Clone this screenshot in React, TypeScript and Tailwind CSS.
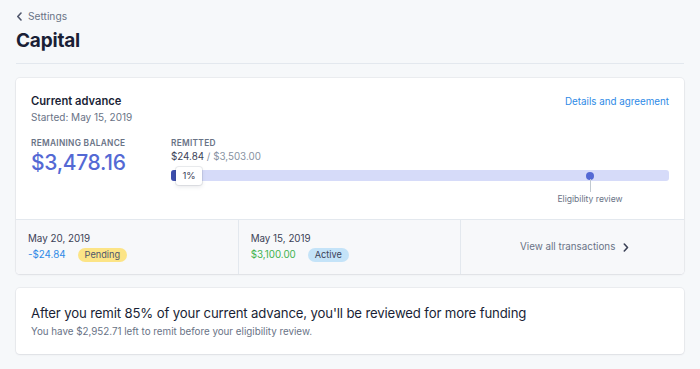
import React from "react";

export default function App() {
  return (
    <div
      className="min-h-[369px] w-[700px] bg-[#f6f8fa] px-4 text-[#1a1f36]"
      style={{ fontFamily: "Inter, 'Liberation Sans', sans-serif" }}
    >
      <div className="pt-[10px]">
        <div className="flex items-center gap-[5px] text-[10.2px] leading-[13px] text-[#697386]">
          <svg width="7" height="9" viewBox="0 0 7 9" fill="none">
            <path d="M5 1L1.8 4.5L5 8" stroke="#4f566b" strokeWidth="1.6" strokeLinecap="round" strokeLinejoin="round" />
          </svg>
          <span>Settings</span>
        </div>
        <div className="mt-[6px] text-[19px] font-bold leading-[24px] tracking-[-0.2px] text-[#1a1f36]">Capital</div>
      </div>
      <div className="mt-[10px] h-px bg-[#e3e8ee]" />

      <div className="mt-[14px] overflow-hidden rounded-[4px] bg-white shadow-[0_0_0_1px_rgba(60,66,87,0.06),0_1px_2px_rgba(60,66,87,0.08)]">
        <div className="px-[15px] pt-[16px] pb-[16px]">
          <div className="flex items-start justify-between">
            <div>
              <div className="text-[11.2px] font-semibold leading-[15px] text-[#1a1f36]">Current advance</div>
              <div className="mt-[1px] text-[10px] leading-[14px] text-[#697386]">Started: May 15, 2019</div>
            </div>
            <div className="text-[9.8px] leading-[15px] text-[#2e8ae6]">Details and agreement</div>
          </div>
          <div className="mt-[14px] flex">
            <div className="w-[140px] shrink-0">
              <div className="text-[8.3px] font-semibold leading-[11px] tracking-[0.3px] text-[#697386]">REMAINING BALANCE</div>
              <div className="mt-[1px] text-[21px] font-medium leading-[26px] tracking-[-0.3px] text-[#5469d4]">$3,478.16</div>
            </div>
            <div className="flex-1">
              <div className="text-[8.3px] font-semibold leading-[11px] tracking-[0.3px] text-[#697386]">REMITTED</div>
              <div className="mt-[1px] text-[9.8px] leading-[14px]">
                <span className="text-[#3c4257]">$24.84</span>
                <span className="text-[#8792a2]"> / $3,503.00</span>
              </div>
              <div className="relative mt-[6px] h-[11px] rounded-[3px] bg-[#d6dbf9]">
                <div className="absolute left-0 top-0 h-[11px] w-[5px] rounded-l-[3px] bg-[#3d4eac]" />
                <div className="absolute left-[5px] top-[-3px] flex h-[18px] w-[26px] items-center justify-center rounded-[3px] bg-white text-[9.5px] text-[#3c4257] shadow-[0_0_0_1px_rgba(60,66,87,0.1),0_2px_4px_rgba(60,66,87,0.12)]">
                  1%
                </div>
                <div className="absolute left-[415px] top-[1.5px] h-[8px] w-[8px] rounded-full bg-[#5469d4]" />
                <div className="absolute left-[418.5px] top-[9px] h-[13px] w-px bg-[#c1c9d2]" />
                <div className="absolute left-[369px] top-[23px] w-[100px] text-center text-[8.6px] leading-[12px] text-[#697386]">
                  Eligibility review
                </div>
              </div>
              <div className="h-[22px]" />
            </div>
          </div>
        </div>
        <div className="grid h-[55px] grid-cols-3 border-t border-[#e3e8ee] bg-[#f7f8fa]">
          <div className="border-r border-[#e3e8ee] px-[12px] pt-[12px]">
            <div className="text-[9.8px] leading-[14px] text-[#3c4257]">May 20, 2019</div>
            <div className="mt-[2px] flex items-center gap-[12px]">
              <span className="text-[9.8px] leading-[14px] text-[#2e8ae6]">-$24.84</span>
              <span className="rounded-[7px] bg-[#fce486] px-[7px] text-[9.2px] leading-[14px] text-[#4f566b]">Pending</span>
            </div>
          </div>
          <div className="border-r border-[#e3e8ee] px-[12px] pt-[12px]">
            <div className="text-[9.8px] leading-[14px] text-[#3c4257]">May 15, 2019</div>
            <div className="mt-[2px] flex items-center gap-[12px]">
              <span className="text-[9.8px] leading-[14px] text-[#3fb34f]">$3,100.00</span>
              <span className="rounded-[7px] bg-[#c4e3f8] px-[7px] text-[9.2px] leading-[14px] text-[#3c4257]">Active</span>
            </div>
          </div>
          <div className="flex items-center justify-center gap-[8px] pl-[4px]">
            <span className="text-[9.8px] text-[#697386]">View all transactions</span>
            <svg width="6" height="9" viewBox="0 0 6 9" fill="none">
              <path d="M1.3 1L4.5 4.5L1.3 8" stroke="#3c4257" strokeWidth="1.6" strokeLinecap="round" strokeLinejoin="round" />
            </svg>
          </div>
        </div>
      </div>

      <div className="mt-[14px] rounded-[4px] bg-white px-[15px] pt-[16px] pb-[16px] shadow-[0_0_0_1px_rgba(60,66,87,0.06),0_1px_2px_rgba(60,66,87,0.08)]">
        <div className="text-[13.2px] leading-[18px] tracking-[-0.15px] text-[#1a1f36]">
          After you remit 85% of your current advance, you'll be reviewed for more funding
        </div>
        <div className="mt-[3px] text-[9.8px] leading-[13px] text-[#697386]">
          You have $2,952.71 left to remit before your eligibility review.
        </div>
      </div>
    </div>
  );
}
